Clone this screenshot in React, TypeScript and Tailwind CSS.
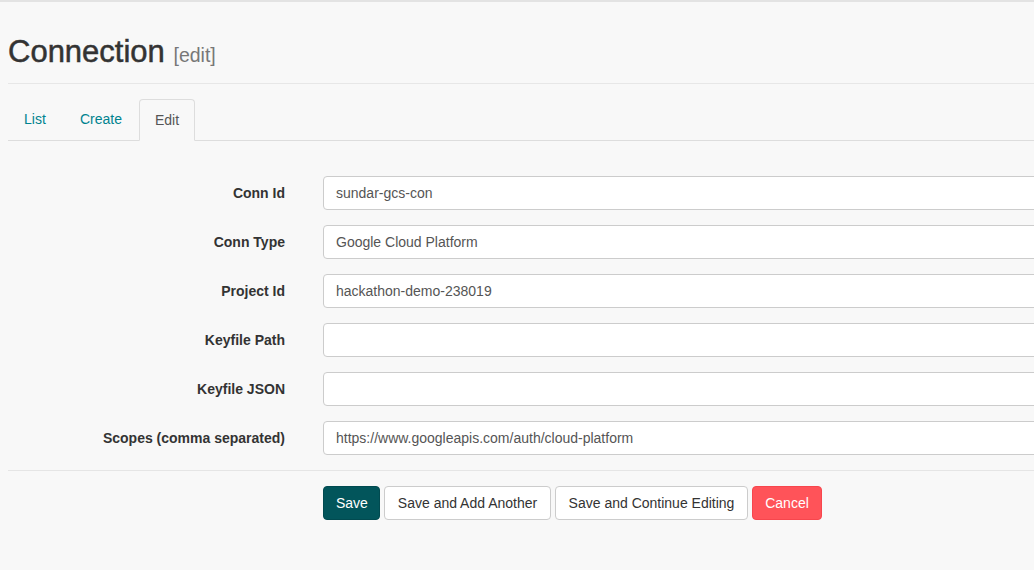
import React from "react";

const rows: { label: string; value: string }[] = [
  { label: "Conn Id", value: "sundar-gcs-con" },
  { label: "Conn Type", value: "Google Cloud Platform" },
  { label: "Project Id", value: "hackathon-demo-238019" },
  { label: "Keyfile Path", value: "" },
  { label: "Keyfile JSON", value: "" },
  { label: "Scopes (comma separated)", value: "https://www.googleapis.com/auth/cloud-platform" },
];

export default function App() {
  return (
    <div
      className="w-[1034px] h-[570px] overflow-hidden bg-[#f8f8f8] text-[#333] border-t-2 border-[#e3e3e3]"
      style={{ fontFamily: '"Liberation Sans", Arial, Helvetica, sans-serif' }}
    >
      <div className="pl-[8px]">
        {/* header */}
        <div className="pt-[33px] pb-[11px] border-b border-[#e7e7e7]">
          <h2 className="text-[31px] leading-[33px] font-normal text-[#333] m-0">
            <span className="[-webkit-text-stroke:0.5px_#333]">Connection</span>{" "}
            <span className="text-[19.5px] text-[#777]">[edit]</span>
          </h2>
        </div>

        {/* tabs */}
        <div className="mt-[15px] flex border-b border-[#dddddd] h-[42px]">
          <div className="h-[41px] px-[15px] flex items-center text-[14px] text-[#00838f] border border-transparent mr-[2px] w-[54px]">
            List
          </div>
          <div className="h-[41px] px-[15px] flex items-center text-[14px] text-[#00838f] border border-transparent mr-[2px] w-[73px]">
            Create
          </div>
          <div className="h-[42px] px-[15px] flex items-center text-[14px] text-[#555] border border-[#dddddd] border-b-[#f8f8f8] rounded-t-[4px] bg-[#f8f8f8] w-[56px] -mb-px">
            Edit
          </div>
        </div>

        {/* form */}
        <div className="pt-[35px] overflow-hidden">
          {rows.map((r) => (
            <div key={r.label} className="flex items-center h-[34px] mb-[15px]">
              <div className="w-[277px] shrink-0 text-right text-[14px] font-bold text-[#333]">{r.label}</div>
              <div className="ml-[38px] w-[800px] h-[34px] shrink-0 bg-white border border-[#cccccc] rounded-[4px] flex items-center px-[12px] text-[14px] text-[#555]">
                {r.value}
              </div>
            </div>
          ))}
        </div>

        <div className="border-t border-[#e5e5e5] mt-0" />

        <div className="flex items-center pt-[15px] pl-[315px] gap-[4px] text-[14px]">
          <button className="h-[34px] px-[12px] rounded-[4px] bg-[#02555b] border border-[#014a50] text-white w-[57px]">
            Save
          </button>
          <button className="h-[34px] px-[12px] rounded-[4px] bg-white border border-[#cccccc] text-[#333] w-[167px]">
            Save and Add Another
          </button>
          <button className="h-[34px] px-[12px] rounded-[4px] bg-white border border-[#cccccc] text-[#333] w-[193px]">
            Save and Continue Editing
          </button>
          <button className="h-[34px] px-[12px] rounded-[4px] bg-[#ff5359] border border-[#f7464d] text-white w-[70px]">
            Cancel
          </button>
        </div>
      </div>
    </div>
  );
}
